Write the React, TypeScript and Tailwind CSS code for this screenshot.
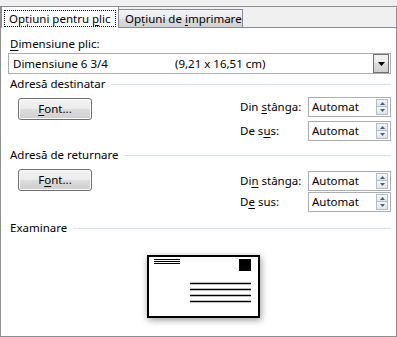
import React from "react";

// Win7 style dialog: "Opțiuni plic"
const U: React.FC<{ children: React.ReactNode }> = ({ children }) => (
  <span className="underline decoration-1 underline-offset-[2px]">{children}</span>
);

const GroupHeader: React.FC<{ title: string; className: string }> = ({ title, className }) => (
  <div className={"flex items-center h-4 leading-4 " + className}>
    <span className="pl-[9px] pr-[6px] whitespace-nowrap">{title}</span>
    <div className="flex-1 h-px bg-[#d5dfe5] mr-[5px]" />
  </div>
);

const SpinBox: React.FC = () => (
  <div className="w-[83px] h-[20px] border border-[#abadb3] bg-white flex items-center">
    <span className="flex-1 pl-[3px] leading-4">Automat</span>
    <div className="flex flex-col w-[12px] mr-[2px]">
      <div className="h-[8px] border border-[#b4bcc6] bg-[linear-gradient(#f6f8fa,#dfe5ec)] flex items-center justify-center">
        <svg width="5" height="3" viewBox="0 0 5 3">
          <path d="M0 3 L2.5 0 L5 3 Z" fill="#4c607a" />
        </svg>
      </div>
      <div className="h-[8px] border border-t-0 border-[#b4bcc6] bg-[linear-gradient(#f6f8fa,#dfe5ec)] flex items-center justify-center">
        <svg width="5" height="3" viewBox="0 0 5 3">
          <path d="M0 0 L2.5 3 L5 0 Z" fill="#4c607a" />
        </svg>
      </div>
    </div>
  </div>
);

const FontButton: React.FC<{ children: React.ReactNode; className: string }> = ({ children, className }) => (
  <button
    type="button"
    className={
      "w-[74px] h-[22px] rounded-[3px] border border-[#707070] bg-[linear-gradient(#f2f2f2,#ebebeb_50%,#dddddd_50%,#cfcfcf)] shadow-[inset_0_0_0_1px_#fcfcfc] leading-4 text-black " +
      className
    }
  >
    {children}
  </button>
);

const Field: React.FC<{ label: React.ReactNode }> = ({ label }) => (
  <div className="flex items-center h-[20px]">
    <span className="w-[68px] leading-4 whitespace-nowrap">{label}</span>
    <SpinBox />
  </div>
);

const Envelope: React.FC = () => (
  <div className="ml-[146px] mt-[19px] w-[113px] h-[63px] border-2 border-black bg-white shadow-[1px_2px_7px_rgba(0,0,0,0.4)]">
    <svg width="109" height="59" viewBox="0 0 109 59">
      <line x1="5" y1="2.5" x2="31" y2="2.5" stroke="#000" strokeWidth="1" />
      <line x1="5" y1="4.5" x2="31" y2="4.5" stroke="#000" strokeWidth="1" />
      <line x1="5" y1="6.5" x2="31" y2="6.5" stroke="#000" strokeWidth="1" />
      <rect x="90" y="2" width="12" height="12" fill="#000" />
      <line x1="41" y1="26.5" x2="102" y2="26.5" stroke="#000" strokeWidth="1.3" />
      <line x1="41" y1="32.5" x2="102" y2="32.5" stroke="#000" strokeWidth="1.3" />
      <line x1="41" y1="38.5" x2="102" y2="38.5" stroke="#000" strokeWidth="1.3" />
      <line x1="41" y1="44.5" x2="102" y2="44.5" stroke="#000" strokeWidth="1.3" />
    </svg>
  </div>
);

export default function App() {
  return (
    <div className="w-[397px] h-[337px] bg-[#f0f0f0] pt-[6px] text-[11.5px] text-black font-['Noto_Sans',sans-serif]">
      <div className="h-[331px] border border-[#8e8f8f] flex flex-col">
        {/* tabs */}
        <div className="h-[20px] flex items-end">
          <div className="relative z-10 w-[118px] h-[22px] -mb-px border-l border-t border-r border-[#898c95] bg-white">
            <div className="mt-[3px] ml-[2px] w-[112px] h-[17px] border border-dotted border-black pl-[4px] leading-[15px] whitespace-nowrap">
              Opțiuni pentru <U>p</U>lic
            </div>
          </div>
          <div className="w-[124px] h-[18px] border-t border-r border-[#898c95] bg-[linear-gradient(#f4f4f4,#eaeaea_50%,#dcdcdc_50%,#d2d2d2)] pl-[6px] leading-[17px] whitespace-nowrap overflow-hidden">
            Opțiuni de <U>i</U>mprimare
          </div>
        </div>

        {/* panel */}
        <div className="flex-1 border-t border-[#898c95] bg-white flex flex-col">
          <div className="mt-[8px] h-4 leading-4 pl-[9px]">
            <U>D</U>imensiune plic:
          </div>
          <div className="mt-px ml-[7px] w-[383px] h-[21px] border border-[#abadb3] flex items-center">
            <span className="w-[166px] pl-[4px] leading-4 whitespace-nowrap">Dimensiune 6 3/4</span>
            <span className="flex-1 leading-4 whitespace-nowrap">(9,21 x 16,51 cm)</span>
            <div className="w-[16px] h-[19px] mr-px border border-[#707070] bg-[linear-gradient(#f2f2f2,#ebebeb_50%,#dddddd_50%,#cfcfcf)] flex items-center justify-center">
              <svg width="7" height="4" viewBox="0 0 7 4">
                <path d="M0 0 L7 0 L3.5 4 Z" fill="#000" />
              </svg>
            </div>
          </div>

          <GroupHeader title="Adresă destinatar" className="mt-[2px]" />
          <div className="mt-[5px] flex items-start">
            <FontButton className="ml-[17px] mt-px">
              <U>F</U>ont...
            </FontButton>
            <div className="ml-auto mr-[5px] flex flex-col gap-[4px]">
              <Field label={<>Din <U>s</U>tânga:</>} />
              <Field label={<>De s<U>u</U>s:</>} />
            </div>
          </div>

          <GroupHeader title="Adresă de returnare" className="mt-[6px]" />
          <div className="mt-[6px] flex items-start">
            <FontButton className="ml-[17px]">
              F<U>o</U>nt...
            </FontButton>
            <div className="ml-auto mr-[5px] mt-[2px] flex flex-col gap-px">
              <Field label={<>Di<U>n</U> stânga:</>} />
              <Field label={<>D<U>e</U> sus:</>} />
            </div>
          </div>

          <GroupHeader title="Examinare" className="mt-[8px]" />
          <Envelope />
        </div>
      </div>
    </div>
  );
}
